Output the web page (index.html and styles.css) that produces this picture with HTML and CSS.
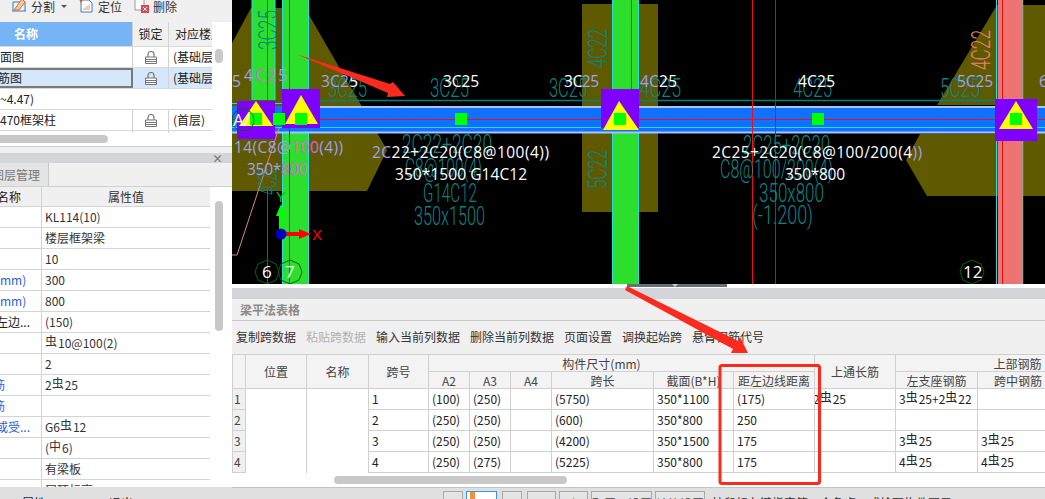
FILE: index.html
```html
<!DOCTYPE html>
<html lang="zh">
<head>
<meta charset="utf-8">
<title>梁平法表格</title>
<link rel="stylesheet" href="styles.css">
</head>
<body>
<div class="app">
  <aside class="left">
    <section class="layers">
      <div class="tools">
        <span class="tool first"><svg class="ti" viewBox="0 0 16 16"><path d="M1 14h14M2 14V5h12v9" fill="none" stroke="#2f7fd0"/><path d="M3 13l8-11 3 3-6 8z" fill="#f6c9a0" stroke="#e07020"/></svg>分割<i class="caret"></i></span>
        <span class="tool"><svg class="ti" viewBox="0 0 16 16"><path d="M3 3h8l3 3v9H3z" fill="#fff" stroke="#2f7fd0"/><path d="M5 12l7-5v6H5z" fill="#f6c9a0"/><path d="M0 0l5 3-2 3z" fill="#e85a10"/></svg>定位</span>
        <span class="tool"><svg class="ti" viewBox="0 0 16 16"><path d="M2 0h9v13H2z" fill="#fff" stroke="#999"/><path d="M8 8h8v8H8z" fill="#d84a50"/><path d="M10 10l4 4m0-4l-4 4" stroke="#fff"/></svg>删除</span>
      </div>
      <div class="ltable">
        <div class="lrow lhead"><div class="lc c1 act">名称</div><div class="lc c2">锁定</div><div class="lc c3">对应楼层</div></div>
        <div class="lrow"><div class="lc c1 t">面图</div><div class="lc c2"><svg class="lock" viewBox="0 0 12 13"><path d="M3 6V3.500a3 3 0 0 1 6 0V6" fill="none" stroke="#777" stroke-width="1.200"/><path d="M.5 6h11v6.500H.5z" fill="#fff" stroke="#777"/><path d="M1 8.500h10M1 10.500h10" stroke="#777"/></svg></div><div class="lc c3 t">(基础层</div></div>
        <div class="lrow sel"><div class="lc c1 t cut">筋图</div><div class="lc c2"><svg class="lock" viewBox="0 0 12 13"><path d="M3 6V3.500a3 3 0 0 1 6 0V6" fill="none" stroke="#777" stroke-width="1.200"/><path d="M.5 6h11v6.500H.5z" fill="#fff" stroke="#777"/><path d="M1 8.500h10M1 10.500h10" stroke="#777"/></svg></div><div class="lc c3 t">(基础层</div></div>
        <div class="lrow plain"><div class="lc t">~4.47)</div></div>
        <div class="lrow"><div class="lc c1 t">470框架柱</div><div class="lc c2"><svg class="lock" viewBox="0 0 12 13"><path d="M3 6V3.500a3 3 0 0 1 6 0V6" fill="none" stroke="#777" stroke-width="1.200"/><path d="M.5 6h11v6.500H.5z" fill="#fff" stroke="#777"/><path d="M1 8.500h10M1 10.500h10" stroke="#777"/></svg></div><div class="lc c3 t">(首层)</div></div>
        <div class="lrow stub"><div class="lc c1"></div><div class="lc c2"></div><div class="lc c3"></div></div>
        <i class="vthumb small"></i>
      </div>
      <div class="hbar"><i class="hthumb"></i></div>
    </section>
    <div class="lgap"></div>
    <div class="dock"><span class="close">×</span></div>
    <div class="tabs"><span class="tab cuttab">图层管理</span></div>
    <section class="props">
      <div class="ptable">
        <div class="prow phead"><div class="pk cutk">属性名称</div><div class="pv center">属性值</div></div>
        <div class="prow"><div class="pk"></div><div class="pv">KL114(10)</div></div>
        <div class="prow"><div class="pk"></div><div class="pv">楼层框架梁</div></div>
        <div class="prow"><div class="pk"></div><div class="pv">10</div></div>
        <div class="prow"><div class="pk blue">mm)</div><div class="pv">300</div></div>
        <div class="prow"><div class="pk blue">mm)</div><div class="pv">800</div></div>
        <div class="prow"><div class="pk cutk2">左边...</div><div class="pv">(150)</div></div>
        <div class="prow"><div class="pk"></div><div class="pv"><span class="rb">虫</span>10@100(2)</div></div>
        <div class="prow"><div class="pk"></div><div class="pv">2</div></div>
        <div class="prow"><div class="pk blue cutk3">筋</div><div class="pv">2<span class="rb">虫</span>25</div></div>
        <div class="prow"><div class="pk blue cutk3">筋</div><div class="pv"></div></div>
        <div class="prow"><div class="pk blue cutk2">或受...</div><div class="pv">G6<span class="rb">虫</span>12</div></div>
        <div class="prow"><div class="pk"></div><div class="pv">(<span class="rb">中</span>6)</div></div>
        <div class="prow"><div class="pk"></div><div class="pv">有梁板</div></div>
        <div class="prow"><div class="pk"></div><div class="pv">层顶标高</div></div>
        <i class="vthumb big"></i>
      </div>
    </section>
    <footer class="lstatus"><span>属性</span><span>退出</span></footer>
  </aside>

  <main class="right">
    <svg class="canvas" viewBox="232 0 813 284" xmlns="http://www.w3.org/2000/svg">
      <rect x="232" y="0" width="813" height="284" fill="#000"/>
      <path class="ol" d="M232 43L251 8L275 8L282 8L309 15L387 150L367 191L232 191Z"/>
      <rect class="ol" x="582" y="4" width="76" height="208"/>
      <path class="ol" d="M997 5L1045 5V196H927L906 160L920 134H1000V105H937Z"/>

      <rect class="col" x="252" y="0" width="23" height="100"/>
      <path class="cy" d="M252 0V100M275 0V100"/>
      <rect class="col" x="282" y="0" width="27" height="284"/>
      <path class="cy" d="M282.500 0V284M308.500 0V284"/>
      <rect class="col" x="612" y="0" width="27" height="284"/>
      <path class="cy" d="M612.500 0V284M638.500 0V284"/>
      <rect class="pink" x="998" y="0" width="25" height="284"/>
      <path class="cy" d="M996.500 0V284"/>
      <path class="gl" d="M1022.500 0V284"/>

      <rect class="beam" x="232" y="106" width="813" height="27"/>
      <path class="lb" d="M302 107H1045M232 132.500H1045"/>
      <path class="cy" d="M232 127.500H1045M232 103.500H282"/>
      <path class="tl" d="M320 100.500H997"/>
      <path class="rd" d="M232 119.500H1045"/>
      <path class="rd" d="M267.500 0V284"/>
      <path class="dr" d="M289.500 0V284"/>
      <path class="rd" d="M631.500 0V100"/>
      <path class="rd" d="M752.500 0V284"/>
      <path class="dr" d="M775.500 0V284"/>
      <path class="rd" d="M1002.500 0V284"/>
      <path class="pl" d="M279 128L237 255H232"/>

      <text class="tt" x="328" y="97" textLength="39" lengthAdjust="spacingAndGlyphs">3C25</text>
      <text class="tt" x="430" y="97" textLength="39" lengthAdjust="spacingAndGlyphs">3C25</text>
      <text class="tt" x="549" y="97" textLength="38" lengthAdjust="spacingAndGlyphs">3C25</text>
      <text class="tt" x="640" y="97" textLength="41" lengthAdjust="spacingAndGlyphs">4C25</text>
      <text class="tt" x="793" y="97" textLength="39" lengthAdjust="spacingAndGlyphs">4C25</text>
      <text class="tt" x="940" y="97" textLength="40" lengthAdjust="spacingAndGlyphs">5C25</text>
      <text class="tt" x="402" y="153" textLength="90" lengthAdjust="spacingAndGlyphs">2C22+2C20</text>
      <text class="tt" x="405" y="177" textLength="77" lengthAdjust="spacingAndGlyphs">C8@100(4)</text>
      <text class="tt" x="423" y="202" textLength="54" lengthAdjust="spacingAndGlyphs">G14C12</text>
      <text class="tt" x="414" y="225" textLength="71" lengthAdjust="spacingAndGlyphs">350x1500</text>
      <text class="tt" x="743" y="154" textLength="87" lengthAdjust="spacingAndGlyphs">2C25+2C20</text>
      <text class="tt" x="720" y="178" textLength="113" lengthAdjust="spacingAndGlyphs">C8@100/200(4)</text>
      <text class="tt" x="759" y="202" textLength="65" lengthAdjust="spacingAndGlyphs">350x800</text>
      <text class="tt" x="752" y="224" textLength="61" lengthAdjust="spacingAndGlyphs">(-1.200)</text>
      <text class="tt" transform="translate(277 50) rotate(-90)" textLength="40" lengthAdjust="spacingAndGlyphs">3C25</text>
      <text class="tt" transform="translate(607 68) rotate(-90)" textLength="39" lengthAdjust="spacingAndGlyphs">4C22</text>
      <text class="tt" transform="translate(607 189) rotate(-90)" textLength="39" lengthAdjust="spacingAndGlyphs">5C22</text>
      <text class="tt" transform="translate(277 195) rotate(-90)" textLength="28" lengthAdjust="spacingAndGlyphs">4C22</text>
      <text class="tt sal" transform="translate(990 70) rotate(-90)" textLength="40" lengthAdjust="spacingAndGlyphs">4C22</text>

      <rect class="pu" x="237" y="101" width="38" height="38"/>
      <rect class="pu" x="282" y="89" width="38" height="39"/>
      <rect class="pu" x="601" y="89" width="38" height="39"/>
      <rect class="pu" x="995" y="99" width="42" height="42"/>
      <path class="ye" d="M256 101L273 126H239Z"/>
      <path class="ye" d="M301 95L318 124H285Z"/>
      <path class="ye" d="M619 101L639 130H603Z"/>
      <path class="ye" d="M1016 101L1033 129H999Z"/>
      <rect class="gr" x="250" y="113" width="12" height="12"/>
      <rect class="gr" x="273" y="113" width="12" height="12"/>
      <rect class="gr" x="295" y="113" width="12" height="12"/>
      <rect class="gr" x="455" y="113" width="12" height="12"/>
      <rect class="gr" x="614" y="113" width="12" height="12"/>
      <rect class="gr" x="812" y="113" width="12" height="12"/>
      <rect class="gr" x="1010" y="113" width="12" height="12"/>

      <circle class="ring" cx="243" cy="120" r="11"/>
      <text class="wt big" x="233" y="126">A/</text>

      <text class="wt li" x="232" y="87">5</text>
      <text class="wt li" x="244" y="81" textLength="43">4<tspan class="mg">C2</tspan>5</text>
      <text class="wt" x="321" y="87" textLength="37"><tspan class="lit">3C2</tspan>5</text>
      <text class="wt" x="443" y="87" textLength="36">3C25</text>
      <text class="wt" x="564" y="87" textLength="35">3C<tspan class="lit">25</tspan></text>
      <text class="wt" x="640" y="87" textLength="37"><tspan class="lit">4C</tspan>25</text>
      <text class="wt" x="798" y="87" textLength="37">4C25</text>
      <text class="wt" x="957" y="87" textLength="36"><tspan class="lit">5C25</tspan></text>
      <text class="wt li" x="1039" y="87">6</text>
      <text class="wt li" x="234" y="153" textLength="109">14(C8@<tspan class="mg">100</tspan>(4))</text>
      <text class="wt li" x="247" y="175" textLength="60">350*<tspan class="mg">800</tspan></text>
      <text class="wt" x="372" y="158" textLength="177"><tspan class="lit">2C</tspan>22+2C20(C8@100(4))</text>
      <text class="wt" x="395" y="180" textLength="132">350*1500 G14C12</text>
      <text class="wt" x="712" y="158" textLength="210">2C25+2C20(C8@100/200(4<tspan class="lit">))</tspan></text>
      <text class="wt" x="785" y="180" textLength="60">350*800</text>

      <path class="ax-g" d="M281 234V213"/>
      <path class="ax-gh" d="M281 204L286 216H276Z"/>
      <text class="ax-y" x="276" y="202">Y</text>
      <path class="ax-r" d="M281 234H300"/>
      <path class="ax-rh" d="M311 234L299 229V239Z"/>
      <circle class="ax-o" cx="281" cy="234" r="5.500"/>
      <text class="ax-x" x="312" y="240">X</text>

      <path class="ring" d="M267 260L276 264L279 272L276 280L267 284L258 280L255 272L258 264Z"/>
      <path class="ring" d="M290 260L299 264L302 272L299 280L290 284L281 280L278 272L281 264Z"/>
      <path class="ring" d="M972 260L981 264L984 272L981 280L972 284L963 280L960 272L963 264Z"/>
      <text class="wt big" x="262" y="278">6</text>
      <text class="wt big" x="285" y="278">7</text>
      <text class="wt big" x="963" y="278">12</text>
    </svg>

    <div class="split"><i class="grip"><b></b></i></div>
    <div class="dockbar"></div>
    <section class="grid-panel">
      <h2 class="ptitle">梁平法表格</h2>
      <nav class="gbar">
        <span>复制跨数据</span><span class="off">粘贴跨数据</span><span>输入当前列数据</span><span>删除当前列数据</span><span>页面设置</span><span>调换起始跨</span><span>悬臂钢筋代号</span>
      </nav>
      <div class="gwrap">
        <table class="gt">
          <colgroup>
            <col class="w13"><col class="w61"><col class="w62"><col class="w60"><col class="w41"><col class="w41"><col class="w41"><col class="w102"><col class="w80"><col class="w81"><col class="w81"><col class="w82"><col class="w81"><col class="w81">
          </colgroup>
          <thead>
            <tr class="h1">
              <th rowspan="2"></th><th rowspan="2">位置</th><th rowspan="2">名称</th><th rowspan="2">跨号</th>
              <th colspan="6" class="shift">构件尺寸(mm)</th>
              <th rowspan="2">上通长筋</th>
              <th colspan="3">上部钢筋</th>
            </tr>
            <tr class="h2">
              <th>A2</th><th>A3</th><th>A4</th><th>跨长</th><th class="nw">截面(B*H)</th><th>距左边线距离</th><th>左支座钢筋</th><th>跨中钢筋</th><th>右支座钢筋</th>
            </tr>
          </thead>
          <tbody>
            <tr><th class="rn">1</th><td rowspan="5" class="blank"></td><td rowspan="5" class="blank"></td><td>1</td><td>(100)</td><td>(250)</td><td></td><td>(5750)</td><td>350*1100</td><td>(175)</td><td class="neg">2<span class="rb">虫</span>25</td><td>3<span class="rb">虫</span>25+2<span class="rb">虫</span>22</td><td></td><td></td></tr>
            <tr><th class="rn">2</th><td>2</td><td>(250)</td><td>(250)</td><td></td><td>(600)</td><td>350*800</td><td>250</td><td></td><td></td><td></td><td></td></tr>
            <tr><th class="rn">3</th><td>3</td><td>(250)</td><td>(250)</td><td></td><td>(4200)</td><td>350*1500</td><td>175</td><td></td><td>3<span class="rb">虫</span>25</td><td>3<span class="rb">虫</span>25</td><td></td></tr>
            <tr><th class="rn">4</th><td>4</td><td>(250)</td><td>(275)</td><td></td><td>(5225)</td><td>350*800</td><td>175</td><td></td><td>4<span class="rb">虫</span>25</td><td>4<span class="rb">虫</span>25</td><td></td></tr>
            <tr><th class="rn"></th><td></td><td></td><td></td><td></td><td></td><td></td><td></td><td></td><td></td><td></td><td></td></tr>
          </tbody>
        </table>
      </div>
      <div class="ghbar"><i class="gthumb"></i></div>
    </section>
    <footer class="status">
      <span class="st-text">Pb #</span>
      <span class="sb w20"></span>
      <span class="sb w30 on"><i class="chip"></i></span>
      <span class="sb w20 gap1">✕</span>
      <span class="sb w29 gap1">∠</span>
      <span class="sb w29">┼</span>
      <span class="sb w61 txt">配置项设置</span>
      <span class="sb w50 txt">计算设置</span>
      <span class="hint">按鼠标左键指定第一个角点，或拾取构件图元</span>
    </footer>
  </main>
</div>
<svg class="marks" viewBox="0 0 1045 499" xmlns="http://www.w3.org/2000/svg">
  <path class="ar" d="M296 54L390 84L393 82L405 96L387 97L388 93Z"/>
  <path class="ar" d="M625 290L627 286L738 341L740 337L748 353L731 353L733 349Z"/>
  <rect class="box" x="720" y="365.500" width="99.500" height="118" rx="2"/>
</svg>
</body>
</html>
```
FILE: styles.css
```css
* { box-sizing: border-box; }
html, body { margin: 0; height: 499px; overflow: hidden; }
body {
  position: relative;
  font: 12px/1.2 "Noto Sans CJK SC", "Noto Sans", sans-serif;
  color: #222;
  background: #f0f0f0;
}
.app { display: flex; width: 1045px; height: 499px; }

/* left column */
.left { width: 232px; flex: none; display: flex; flex-direction: column; background: #f0f0f0; overflow: hidden; }
.layers { height: 147px; background: #fff; border-bottom: 1px solid #d0d0d0; flex: none; }
.tools { height: 22px; background: #f0f0f0; display: flex; padding-left: 11px; gap: 11px; align-items: flex-start; overflow: hidden; color: #333; }
.tool { display: flex; align-items: flex-start; gap: 4px; height: 22px; line-height: 13px; }
.ti { width: 16px; height: 16px; flex: none; margin-top: -3px; }
.caret { width: 0; height: 0; margin: 5px 0 0 2px; border: 3px solid transparent; border-top: 3px solid #555; }
.ltable { position: relative; height: 111px; width: 227px; overflow: hidden; background: #fff; }
.lrow { display: flex; height: 21px; border-bottom: 1px solid #d8d8d8; width: 212px; }
.lhead { height: 25px; background: #f0f0f0; }
.lc { display: flex; align-items: center; border-right: 1px solid #d4d4d4; overflow: hidden; white-space: nowrap; flex: none; }
.c1 { width: 133px; }
.c2 { width: 36px; justify-content: center; }
.c3 { width: 43px; padding-left: 4px; border-right: 0; }
.lhead .lc { font-size: 12px; padding-left: 0; justify-content: center; }
.lhead .c3 { justify-content: flex-start; padding-left: 6px; }
.act { background: #76b4f5; color: #fff; font-weight: 700; justify-content: flex-start !important; padding-left: 14px !important; }
.t { font-size: 12px; }
.lock { width: 12px; height: 13px; }
.sel { background: #d5e8fb; }
.sel .c1 { border: 2px solid #7a7a7a; border-left: 0; width: 133px; }
.cut { text-indent: -2px; }
.plain .lc { border: 0; }
.stub { height: 4px; border-bottom: 0; }
.vthumb { position: absolute; left: 215px; width: 8px; border-radius: 4px; background: #c8c8c8; }
.small { top: 27px; height: 14px; }
.big { top: 14px; height: 130px; }
.hbar { height: 13px; background: #fff; padding-top: 2px; }
.hthumb { display: block; width: 108px; height: 8px; background: #c8c8c8; border-radius: 0 4px 4px 0; }
.lgap { height: 6px; background: #f0f0f0; flex: none; }
.dock { height: 10px; background: #d4d5d9; flex: none; display: flex; justify-content: flex-end; padding-right: 9px; }
.close { font-size: 11px; line-height: 10px; color: #777; font-weight: 700; }
.tabs { height: 24px; flex: none; background: #f0f0f0; display: flex; border-bottom: 1px solid #d0d0d0; }
.tab { width: 49px; height: 23px; background: #e4e4e4; border-right: 1px solid #c8c8c8; color: #777; line-height: 23px; white-space: nowrap; overflow: hidden; text-indent: -8px; }
.props { flex: 1; background: #fff; min-height: 0; }
.ptable { position: relative; width: 227px; height: 100%; overflow: hidden; background: #fff; }
.prow { display: flex; height: 21px; width: 210px; border-bottom: 1px solid #d4d4d4; }
.phead { height: 20px; background: #f0f0f0; }
.pk { width: 42px; flex: none; border-right: 1px solid #d4d4d4; white-space: nowrap; overflow: hidden; line-height: 20px; }
.pv { flex: 1; padding-left: 3px; line-height: 20px; white-space: nowrap; overflow: hidden; color: #333; }
.center { text-align: center; padding: 0; }
.blue { color: #2a62d8; }
.cutk { text-indent: -27px; }
.cutk2 { text-indent: -4px; }
.cutk3 { text-indent: -7px; }
.rb { font-size: 12px; position: relative; top: -2px; margin: 0 1px 0 0; }
.lstatus { height: 12px; flex: none; background: #e0e0e0; display: flex; gap: 63px; padding: 9px 0 0 22px; overflow: hidden; line-height: 14px; }

/* right column */
.right { width: 813px; flex: none; display: flex; flex-direction: column; overflow: hidden; }
.canvas { display: block; width: 813px; height: 284px; flex: none; }
.ol { fill: #5f5a00; }
.col { fill: #2ddf2d; }
.pink { fill: #ee7373; }
.cy { stroke: #22e0e0; stroke-width: 1; fill: none; }
.gl { stroke: #9aa090; stroke-width: 1.500; fill: none; }
.beam { fill: #1070ff; }
.lb { stroke: #a8c4ff; stroke-width: 2; fill: none; }
.tl { stroke: #008080; stroke-width: 1.500; fill: none; }
.rd { stroke: #ee1010; stroke-width: 1; fill: none; }
.dr { stroke: #a02020; stroke-width: 1; fill: none; }
.pl { stroke: #e08080; stroke-width: 1; fill: none; }
.pu { fill: #8000ff; }
.ye { fill: #ffff00; }
.gr { fill: #00ff00; }
.ring { fill: none; stroke: #006400; stroke-width: 1; }
.tt { font: 300 26px Roboto, "Liberation Sans", sans-serif; fill: #078585; }
.sal { fill: #e88070; }
.wt { font: 15.500px "Open Sans", sans-serif; fill: #fff; }
.big { font-size: 17px; }
.li { fill: #a0a0f0; }
.lit { fill: #a0a0f0; }
.mg { fill: #e060e0; }
.ax-g { stroke: #00ff00; stroke-width: 4; }
.ax-gh { fill: #00ff00; }
.ax-y { font: 14px "Liberation Sans", sans-serif; fill: #00cc00; }
.ax-r { stroke: #ff0000; stroke-width: 4; }
.ax-rh { fill: #ff0000; }
.ax-o { fill: #0000c0; }
.ax-x { font: 15px "Liberation Sans", sans-serif; fill: #ff0000; }

.split { height: 4px; background: #fff; flex: none; }
.grip { display: block; position: relative; margin-left: 395px; width: 100px; height: 3px; background: #667078; }
.grip b { position: absolute; left: 45px; top: 0; border: 3px solid transparent; border-top: 3px solid #c8ccd0; }
.dockbar { height: 11px; background: #d4d5d9; flex: none; }
.grid-panel { height: 188px; flex: none; background: #f0f0f0; display: flex; flex-direction: column; }
.ptitle { margin: 0; height: 22px; padding-left: 8px; font-size: 12px; font-weight: 700; line-height: 21px; color: #8a8a8a; border-bottom: 1px solid #c8c8c8; flex: none; }
.gbar { height: 33px; flex: none; display: flex; gap: 10px; padding-left: 4px; align-items: center; white-space: nowrap; color: #333; }
.off { color: #b0b0b0; }
.gwrap { height: 119px; flex: none; overflow: hidden; background: #fff; }
.gt { table-layout: fixed; border-collapse: collapse; width: 893px; font-size: 12px; }
.w13 { width: 13px; } .w61 { width: 61px; } .w62 { width: 62px; } .w60 { width: 60px; }
.w41 { width: 41px; } .w102 { width: 102px; } .w80 { width: 80px; } .w81 { width: 81px; } .w82 { width: 82px; }
.gt th, .gt td { border: 1px solid #d0d0d0; padding: 0; overflow: hidden; white-space: nowrap; font-weight: 400; }
.gt thead th { background: #f3f3f3; text-align: center; color: #444; }
.h1, .h2 { height: 17px; line-height: 15px; }
.gt tbody tr { height: 21px; }
.gt td { padding-left: 3px; color: #222; background: #fff; }
.gt .rn { background: #f0f0f0; text-align: left; padding-left: 1px; color: #444; }
.gt .blank { background: #fff; }
.shift { padding-right: 40px !important; }
.nw { text-overflow: clip; }
.gt .neg { padding-left: 0; text-indent: -2px; }
.ghbar { height: 14px; flex: none; background: #fff; padding: 3px 0 0 102px; }
.gthumb { display: block; width: 233px; height: 8px; border-radius: 4px; background: #c8c8c8; }
.status { height: 12px; flex: none; background: #e0e0e0; border-top: 1px solid #c4c4c4; display: flex; align-items: flex-start; padding: 3px 0 0 208px; gap: 3px; overflow: hidden; font-size: 11px; position: relative; }
.st-text { width: 0; position: relative; left: -100px; top: 6px; white-space: nowrap; }
.sb { height: 20px; border: 1px solid #a8a8a8; background: #e4e4e4; text-align: center; line-height: 14px; overflow: hidden; white-space: nowrap; flex: none; padding-top: 4px; color: #444; }
.w20 { width: 20px; } .w30 { width: 31px; } .w29 { width: 29px; } .w61 { width: 61px; } .w50 { width: 50px; }
.on { background: #fff; border: 1px solid #3a96ea; text-align: left; padding: 0 0 0 3px; }
.chip { display: block; width: 5px; height: 8px; background: #f09040; }
.gap1 { margin-left: 2px; }
.txt { font-size: 12px; padding-top: 4px; line-height: 16px; }
.hint { margin-left: 4px; white-space: nowrap; padding-top: 5px; font-size: 12px; color: #333; }

.marks { position: absolute; left: 0; top: 0; width: 1045px; height: 499px; pointer-events: none; }
.ar { fill: #fa2b1e; }
.box { fill: none; stroke: #fa2b1e; stroke-width: 3; }
```
